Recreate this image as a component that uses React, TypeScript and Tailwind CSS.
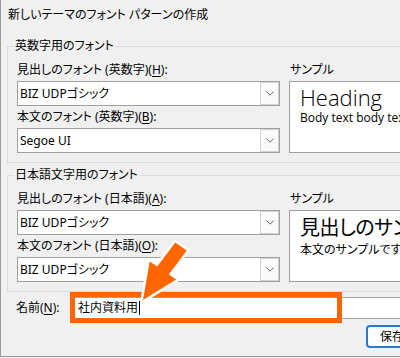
import { ReactNode } from 'react'

// accelerator key, underlined like a Win32 dialog label
function Acc({ k }: { k: string }) {
  return <span className="underline underline-offset-2">{k}</span>
}

function Label({ children }: { children: ReactNode }) {
  return <div className="whitespace-nowrap pb-[3px] pt-[3px] leading-4">{children}</div>
}

function Combo({ value }: { value: string }) {
  return (
    <div className="flex h-[25px] w-[263px] border border-[#a0a0a0] bg-white">
      <div className="flex-1 whitespace-nowrap pl-[2px] leading-[23px]">{value}</div>
      <div className="flex w-[19px] items-center justify-center border border-[#d2d2d2] bg-[#fafafa]">
        <svg width="8" height="5" viewBox="0 0 8 5" aria-hidden="true">
          <path d="M0.5 0.5 L4 4.2 L7.5 0.5" fill="none" stroke="#6a6a6a" strokeWidth={1} />
        </svg>
      </div>
    </div>
  )
}

function Group({
  title,
  rows,
  sample,
}: {
  title: string
  rows: { label: ReactNode; value: string }[]
  sample: ReactNode
}) {
  return (
    <fieldset className="w-[470px] border border-[#dcdcdc] pb-[9px] pl-[9px] pt-[5px]">
      <legend className="ml-[-3px] px-[1px] leading-4">{title}</legend>
      <div className="flex gap-[9px]">
        <div className="flex w-[263px] flex-col">
          {rows.map((r, i) => (
            <div key={i}>
              <Label>{r.label}</Label>
              <Combo value={r.value} />
            </div>
          ))}
        </div>
        <div className="flex flex-col">
          <div className="pb-[3px] pl-[1px] pt-[3px] leading-4">サンプル</div>
          <div className="h-[72px] w-[170px] overflow-hidden border border-[#a0a0a0] bg-white pl-[10px]">
            {sample}
          </div>
        </div>
      </div>
    </fieldset>
  )
}

export default function App() {
  return (
    <div className="relative h-[358px] w-[400px] overflow-hidden bg-[#f0f0f0] font-['Noto_Sans','Noto_Sans_CJK_JP',sans-serif] text-[12px] text-black [font-feature-settings:'palt']">
      <div className="flex h-[357px] w-[480px] flex-col border-b border-l border-[#9a9a9a]">
        {/* Title bar */}
        <div className="h-[31px] whitespace-nowrap pl-[7px] leading-[30px]">
          新しいテーマのフォント パターンの作成
        </div>

        <div className="flex flex-col pl-[6px] pt-[7px]">
          <Group
            title="英数字用のフォント"
            rows={[
              { label: <>見出しのフォント (英数字)(<Acc k="H" />):</>, value: 'BIZ UDPゴシック' },
              { label: <>本文のフォント (英数字)(<Acc k="B" />):</>, value: 'Segoe UI' },
            ]}
            sample={
              <div className="whitespace-nowrap pt-[2px] font-['Open_Sans','Noto_Sans',sans-serif]">
                <div className="text-[22px] font-light leading-[26px]">Heading</div>
                <div className="text-[12px] leading-4">Body text body text body text.</div>
              </div>
            }
          />

          <div className="mt-[4px]">
            <Group
              title="日本語文字用のフォント"
              rows={[
                { label: <>見出しのフォント (日本語)(<Acc k="A" />):</>, value: 'BIZ UDPゴシック' },
                { label: <>本文のフォント (日本語)(<Acc k="O" />):</>, value: 'BIZ UDPゴシック' },
              ]}
              sample={
                <div className="whitespace-nowrap pt-[2px]">
                  <div className="text-[20px] leading-[29px] tracking-[-0.5px]">見出しのサンプルです</div>
                  <div className="text-[12px] leading-4">本文のサンプルです。</div>
                </div>
              }
            />
          </div>

          {/* Name row */}
          <div className="mt-[5px] flex h-[22px] items-center">
            <div className="w-[67px] whitespace-nowrap pl-[9px] leading-[22px]">
              名前(<Acc k="N" />):
            </div>
            <div className="flex h-[22px] w-[400px] items-center border border-[#a0a0a0] bg-white pl-[3px]">
              <span className="leading-[20px]">社内資料用</span>
              <span className="ml-[1px] inline-block h-[14px] w-[1px] bg-black" />
            </div>
          </div>

          {/* Save button */}
          <div className="ml-[359px] mt-[6px] h-[23px] w-[80px] whitespace-nowrap rounded-[4px] border-2 border-[#2a78cc] bg-[#fdfdfd] pl-[12px] leading-[19px]">
            保存(<Acc k="S" />)
          </div>
        </div>
      </div>

      {/* Annotation: orange highlight around the name field */}
      <div className="pointer-events-none absolute left-[70px] top-[292px] h-[31px] w-[272px] border-[5px] border-[#ff6600]" />

      {/* Annotation: arrow pointing at the name field */}
      <svg
        className="pointer-events-none absolute left-0 top-0"
        width="400"
        height="358"
        viewBox="0 0 400 358"
        aria-hidden="true"
      >
        <polygon
          points="143,300 149.7,261.5 157.2,266.6 175.2,242.6 186.8,250.4 168.8,274.4 176.2,279.5"
          fill="#ff6600"
          stroke="#ffffff"
          strokeWidth={5}
          strokeLinejoin="round"
          paintOrder="stroke"
        />
      </svg>
    </div>
  )
}
